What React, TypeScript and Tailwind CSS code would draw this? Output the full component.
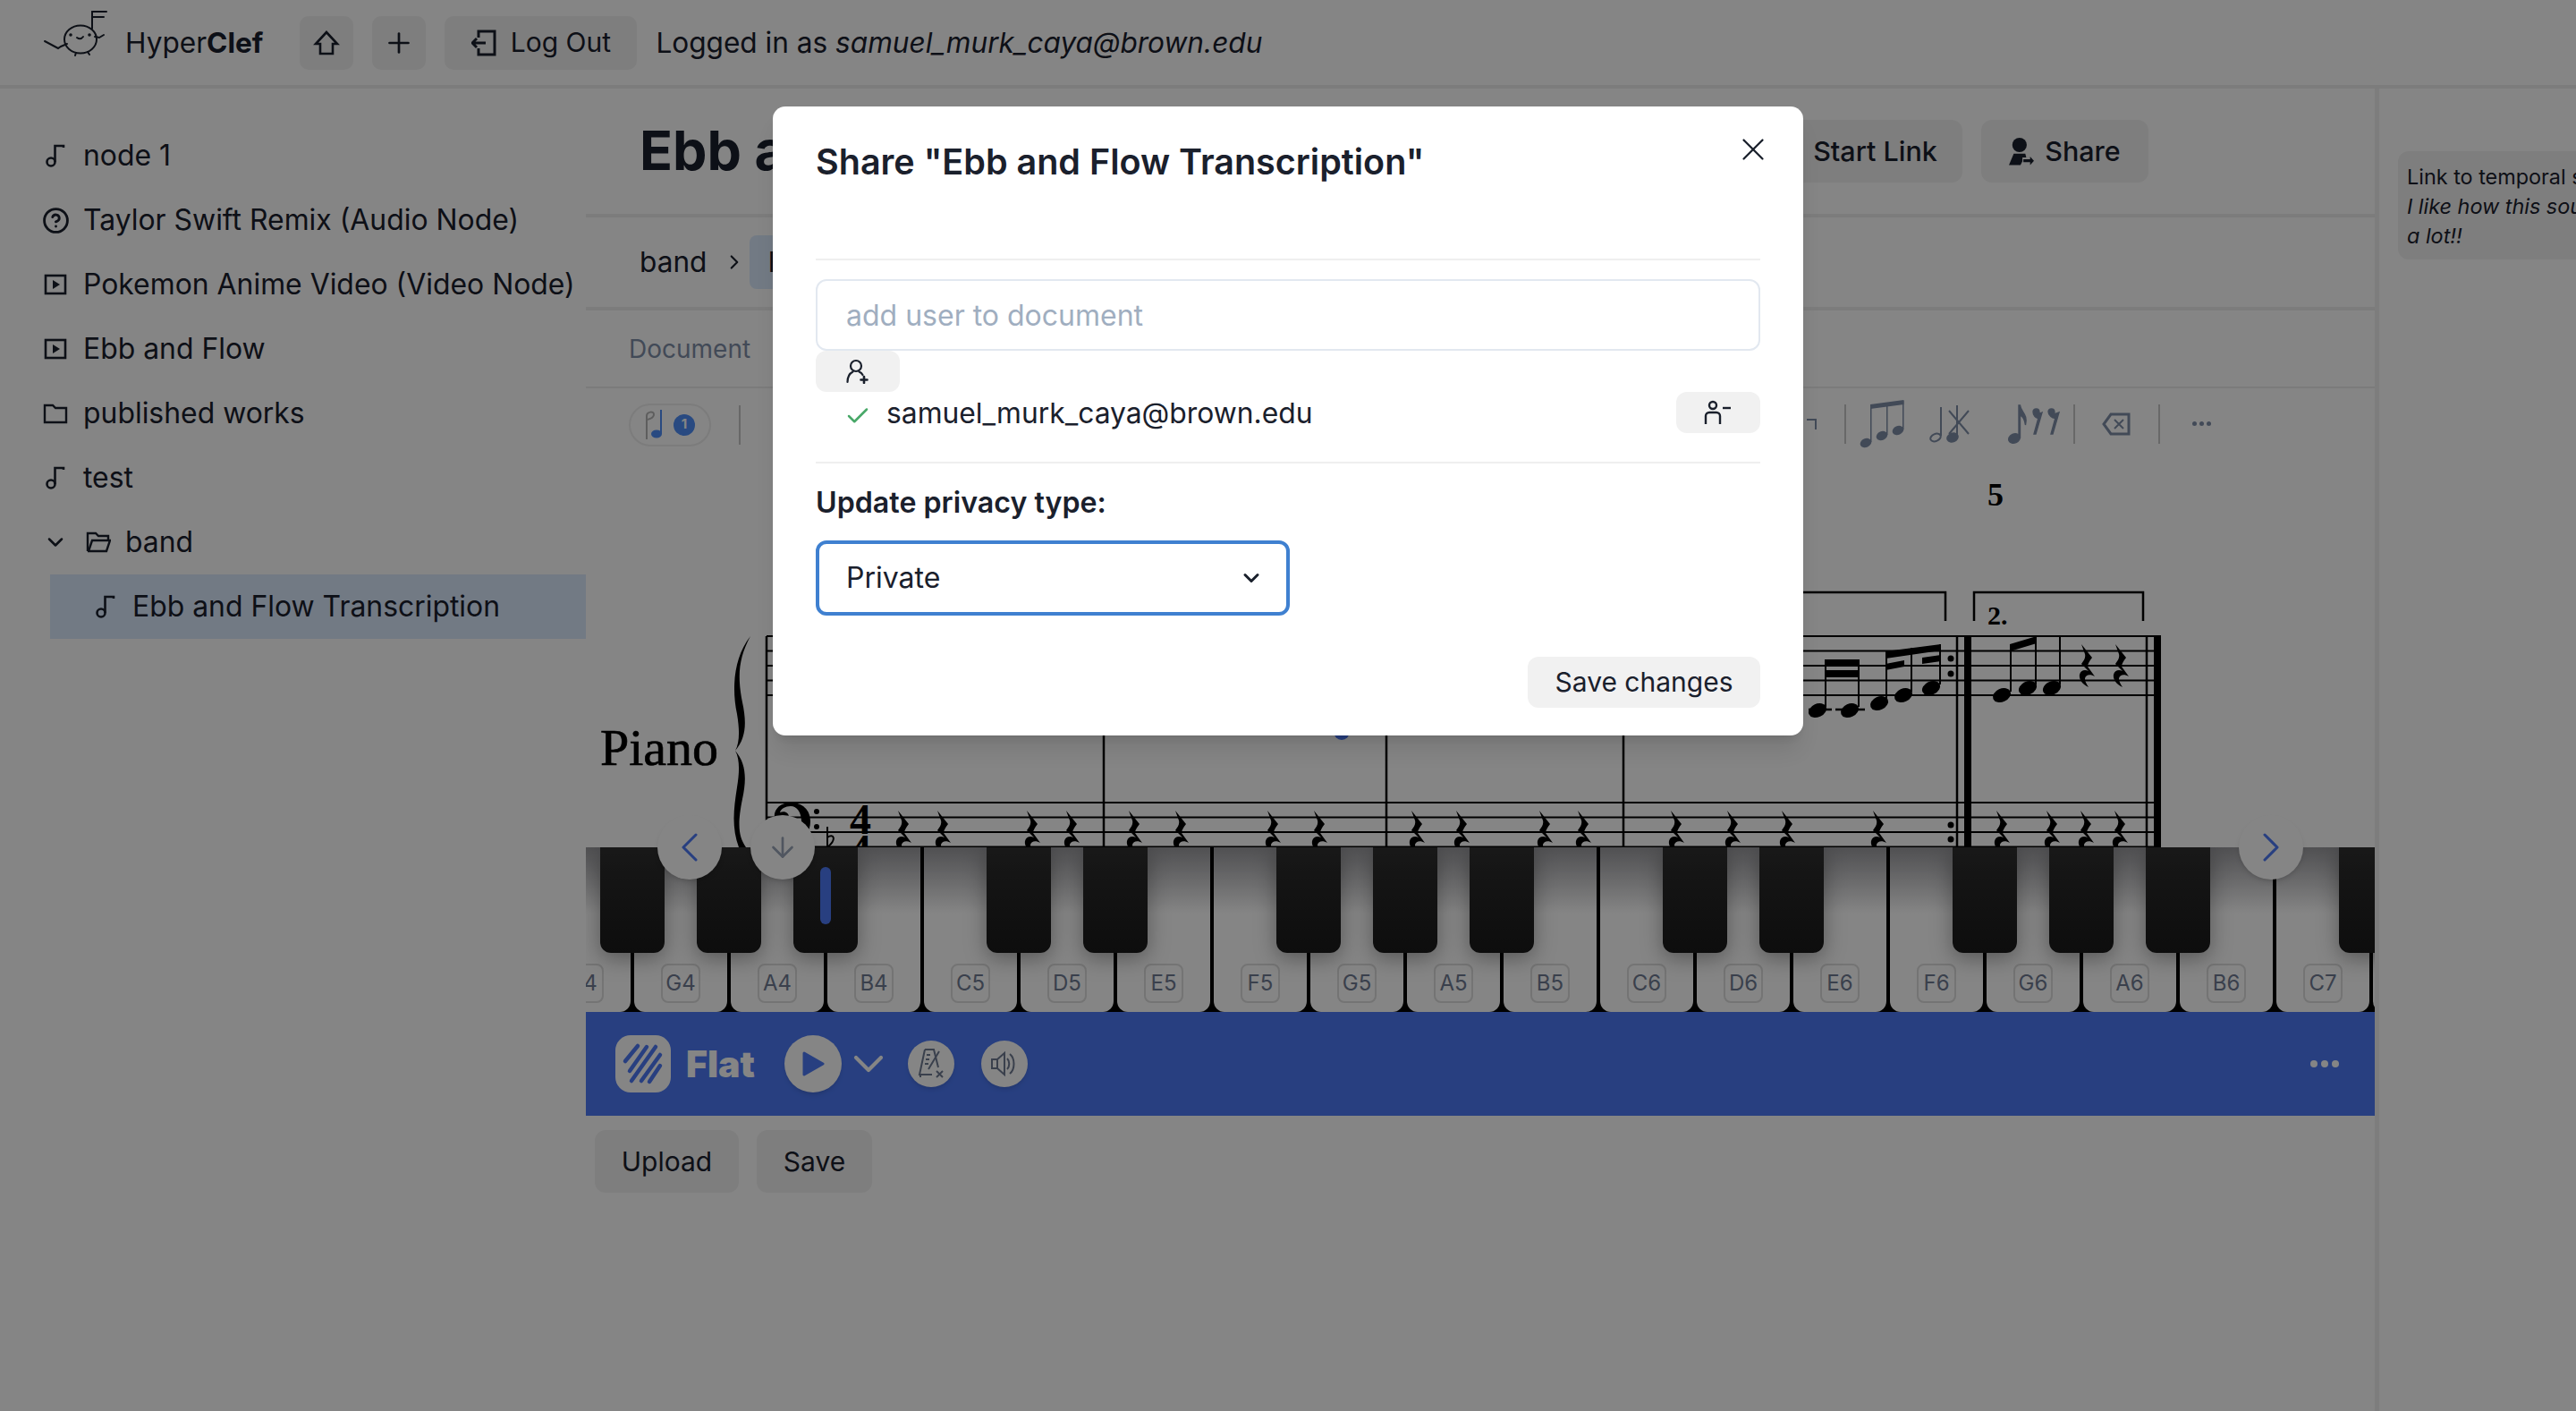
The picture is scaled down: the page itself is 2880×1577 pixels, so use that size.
import { ChevronDown, ChevronLeft, ChevronRight, ArrowDown, CircleHelp, Plus, X, Check } from 'lucide-react'

const WHITE_KEYS = [
  { label: 'F4', black: true }, { label: 'G4', black: true }, { label: 'A4', black: true, active: true }, { label: 'B4' },
  { label: 'C5', black: true }, { label: 'D5', black: true }, { label: 'E5' },
  { label: 'F5', black: true }, { label: 'G5', black: true }, { label: 'A5', black: true }, { label: 'B5' },
  { label: 'C6', black: true }, { label: 'D6', black: true }, { label: 'E6' },
  { label: 'F6', black: true }, { label: 'G6', black: true }, { label: 'A6', black: true }, { label: 'B6' },
  { label: 'C7', black: true }, { label: 'D7' },
]

const BASS_RESTS = [1009, 1053, 1153, 1197, 1267, 1319, 1422, 1474, 1583, 1633, 1726, 1769, 1873, 1936, 1997, 2099, 2237, 2293, 2331, 2369]
const STAFF_TOP = [711, 727.5, 744, 760.5, 777]
const STAFF_BOTTOM = [897, 913.5, 930, 946.5]

function NoteIcon() {
  return (
    <svg width="24" height="26" viewBox="0 0 24 26" fill="none" stroke="currentColor" strokeWidth="2.6" className="shrink-0">
      <circle cx="7" cy="20" r="4.5" />
      <path d="M11.5 20V2H21V4" />
    </svg>
  )
}

function PlaySquareIcon() {
  return (
    <svg width="26" height="24" viewBox="0 0 26 24" className="shrink-0">
      <rect x="2" y="2" width="22" height="20" fill="none" stroke="currentColor" strokeWidth="2.6" />
      <path d="M10 7l8 5-8 5z" fill="currentColor" />
    </svg>
  )
}

function FolderIcon() {
  return (
    <svg width="28" height="24" viewBox="0 0 28 24" fill="none" stroke="currentColor" strokeWidth="2.4" className="shrink-0">
      <path d="M2 22V2h9l3 3h11v4" />
      <path d="M2 22h21l4-12H7L3 22" />
    </svg>
  )
}

function Logo() {
  return (
    <svg width="76" height="52" viewBox="0 0 76 52" fill="none" stroke="#1a202c" strokeWidth="2" strokeLinecap="round" className="shrink-0 -mt-[22px]">
      <ellipse cx="42" cy="33" rx="18" ry="15.5" />
      <path d="M2 35l15 8 3-2 7-3" />
      <path d="M58 30l5 1 5-3" />
      <path d="M55 2v19" />
      <path d="M55 2h16M55 8h13" />
      <path d="M37 48l-1 3M50 47l2 3" />
      <circle cx="31" cy="28" r="0.8" />
      <circle cx="52" cy="28" r="0.8" />
      <path d="M38 31q4 3 7-1" />
    </svg>
  )
}

function PersonPlus() {
  return (
    <svg width="26" height="28" viewBox="0 0 26 28" fill="none" stroke="#1a202c" strokeWidth="2.2" strokeLinecap="round">
      <circle cx="11" cy="8" r="6" />
      <path d="M1.500 26c0-6 3-10 6-11.500M14.500 14.500c2 .8 3.200 2 4 3.500" />
      <path d="M20 20v7M16.500 23.500h7" strokeWidth="2.6" />
    </svg>
  )
}

function PersonMinus() {
  return (
    <svg width="32" height="28" viewBox="0 0 32 28" fill="none" stroke="#1a202c" strokeWidth="2.4">
      <circle cx="10" cy="6" r="4" />
      <path d="M2 27v-9a4 4 0 0 1 4-4h8a4 4 0 0 1 4 4v9" />
      <path d="M21 9h9" />
    </svg>
  )
}

function QuarterRest({ x, y }: { x: number; y: number }) {
  return (
    <path
      transform={`translate(${x - 8} ${y})`}
      fill="#000"
      d="M3 0L15 15C12 19 10 22 10 25L18 36C13 33 8 34 7 38C7 42 9 45 11 48C4 45 0 39 1 34C2 29 7 28 11 30L3 22C6 18 8 15 7 11Z"
    />
  )
}

function Head({ x, y }: { x: number; y: number }) {
  return <ellipse cx={x} cy={y} rx="10.500" ry="7.500" transform={`rotate(-24 ${x} ${y})`} fill="#000" />
}

function Score() {
  return (
    <svg viewBox="655 515 2000 432" className="block w-[2000px] h-[432px]">
      <text x="2222" y="565" fontSize="36" fontWeight="700" className="font-['Liberation_Serif',serif]">5</text>
      <text x="671" y="855" fontSize="58" stroke="#000" strokeWidth="0.7" className="font-['Liberation_Serif',serif]">Piano</text>

      {/* brace */}
      <path d="M839 711C826 735 824 755 830 785C835 808 834 825 822 839C834 853 835 870 830 893C824 923 826 935 834 947L826 947C818 925 820 905 824 880C827 862 827 848 822 839C827 830 827 816 824 798C818 770 820 735 839 711Z" fill="#000" />

      {STAFF_TOP.map(y => <line key={y} x1="857" x2="2416" y1={y} y2={y} stroke="#000" strokeWidth="2" />)}
      {STAFF_BOTTOM.map(y => <line key={y} x1="857" x2="2416" y1={y} y2={y} stroke="#000" strokeWidth="2" />)}

      {[857, 1234, 1550, 1815, 2188, 2400].map(x => <line key={x} x1={x} x2={x} y1="711" y2="947" stroke="#000" strokeWidth="2.500" />)}
      <rect x="2196" y="711" width="8" height="236" fill="#000" />
      <rect x="2408" y="711" width="8" height="236" fill="#000" />

      {/* volta brackets */}
      <path d="M1900 662H2175V694" fill="none" stroke="#000" strokeWidth="2.500" />
      <path d="M2207 694V662H2396V694" fill="none" stroke="#000" strokeWidth="2.500" />
      <text x="2222" y="698" fontSize="30" fontWeight="700" className="font-['Liberation_Serif',serif]">2.</text>

      <circle cx="1500" cy="818" r="9" fill="#4d7af6" />

      {/* last bars of the first ending */}
      <path d="M2022 793H2048M2052 793H2085" stroke="#000" strokeWidth="2.500" />
      <Head x={2032} y={794} />
      <Head x={2068} y={794} />
      <path d="M2041 790V737M2078 790V737M2109 782V728M2137 773V724M2169 765V720" stroke="#000" strokeWidth="2" />
      <rect x="2041" y="737" width="38" height="8" fill="#000" />
      <rect x="2041" y="749" width="38" height="8" fill="#000" />
      <Head x={2101} y={786} />
      <Head x={2128} y={777} />
      <Head x={2159} y={769} />
      <path d="M2108 728L2170 720V727L2108 736Z" fill="#000" />
      <path d="M2108 742L2129 738V745L2108 749Z" fill="#000" />
      <path d="M2149 735L2170 732V739L2149 742Z" fill="#000" />
      {[736, 753, 922, 938].map(y => <circle key={y} cx="2181" cy={y} r="3.500" fill="#000" />)}

      {/* second ending */}
      <Head x={2238} y={777} />
      <Head x={2267} y={769} />
      <Head x={2294} y={769} />
      <path d="M2248 773V720M2276 765V712M2303 765V711" stroke="#000" strokeWidth="2" />
      <path d="M2247 720L2277 711V719L2247 728Z" fill="#000" />
      <QuarterRest x={2332} y={720} />
      <QuarterRest x={2370} y={720} />

      {/* bass staff */}
      <path d="M866 916C864 905 872 897 884 897C897 897 906 905 906 918C906 932 896 943 880 952L879 950C890 942 896 930 896 918C896 908 891 901 884 901C878 901 873 904 872 908C878 906 882 909 882 913C882 917 878 920 874 920C870 920 867 919 866 916Z" fill="#000" />
      <circle cx="913" cy="907" r="3" fill="#000" />
      <circle cx="913" cy="924" r="3" fill="#000" />
      <path d="M925 924V947M925 936C932 931 936 938 925 947" fill="none" stroke="#000" strokeWidth="2" />
      <text x="950" y="932" fontSize="48" fontWeight="700" className="font-['Liberation_Serif',serif]">4</text>
      <text x="950" y="966" fontSize="48" fontWeight="700" className="font-['Liberation_Serif',serif]">4</text>
      {BASS_RESTS.map(x => <QuarterRest key={x} x={x} y={906} />)}
    </svg>
  )
}

function Keyboard() {
  return (
    <div className="relative h-[184px] bg-black overflow-hidden">
      <div className="flex gap-[4px] h-full -ml-[54px]">
        {WHITE_KEYS.map(k => (
          <div key={k.label} className="relative w-[104px] h-full shrink-0 rounded-b-[12px] bg-linear-to-b from-[#9a9a9e] via-white via-[40%] to-white">
            <span className="absolute left-[30px] top-[130px] w-[44px] h-[44px] flex items-center justify-center rounded-[8px] border-2 border-[#dedede] text-[24px] text-[#6f7b93]">{k.label}</span>
            {k.black && (
              <div className="absolute z-10 top-0 -right-[38px] w-[72px] h-[118px] rounded-b-[12px] bg-linear-to-b from-[#2f2f2f] to-[#1a1a1a] shadow-[0_6px_24px_rgba(0,0,0,0.35)]">
                {k.active && <div className="absolute left-[30px] top-[22px] w-[12px] h-[64px] rounded-full bg-[#4d7af6]" />}
              </div>
            )}
          </div>
        ))}
      </div>
    </div>
  )
}

function FlatBar() {
  return (
    <div className="h-[116px] bg-[#4d7af6] flex items-center pl-[33px] pr-[40px]">
      <div className="w-[62px] h-[64px] rounded-[17px] bg-white flex items-center justify-center">
        <svg width="62" height="64" viewBox="0 0 62 64" stroke="#4d7af6" strokeWidth="4.500" strokeLinecap="round">
          <path d="M11 29L25 12M16 40L35 13M18 51L45 13M29 51L50 22M38 52L50 34" />
        </svg>
      </div>
      <span className="ml-[17px] w-[78px] text-[41px] leading-none font-black text-white">Flat</span>
      <div className="ml-[32px] w-[64px] h-[64px] rounded-full bg-white flex items-center justify-center shadow-md">
        <svg width="26" height="30" viewBox="0 0 26 30"><path d="M3 3l21 12L3 27z" fill="#4d7af6" stroke="#4d7af6" strokeWidth="3" strokeLinejoin="round" /></svg>
      </div>
      <ChevronDown size={56} strokeWidth={1.8} className="ml-[2px] text-white" />
      <div className="ml-[16px] w-[52px] h-[52px] rounded-full bg-white flex items-center justify-center shadow-md">
        <svg width="32" height="36" viewBox="0 0 32 36" fill="none" stroke="#6f7b93" strokeWidth="2">
          <path d="M9 2h10l5 20M9 2L3 30h14" />
          <path d="M11 8h4M10 13h4M9 18h4M13 24l12-20" />
          <path d="M22 26l7 7M29 26l-7 7M4 30v3" />
        </svg>
      </div>
      <div className="ml-[30px] w-[52px] h-[52px] rounded-full bg-white flex items-center justify-center shadow-md">
        <svg width="32" height="32" viewBox="0 0 32 32" fill="none" stroke="#6f7b93" strokeWidth="2">
          <path d="M2 11h6l8-7v24l-8-7H2z" />
          <path d="M8 11v10M19 10c3 3 3 9 0 12M22 5c6 5 6 17 0 22" />
        </svg>
      </div>
      <div className="ml-auto flex gap-[4px]">
        <span className="w-[8px] h-[8px] rounded-full bg-white" />
        <span className="w-[8px] h-[8px] rounded-full bg-white" />
        <span className="w-[8px] h-[8px] rounded-full bg-white" />
      </div>
    </div>
  )
}

function Sidebar() {
  const items = [
    { label: 'node 1', icon: <NoteIcon /> },
    { label: 'Taylor Swift Remix (Audio Node)', icon: <CircleHelp size={31} strokeWidth={2.2} className="shrink-0" /> },
    { label: 'Pokemon Anime Video (Video Node)', icon: <PlaySquareIcon /> },
    { label: 'Ebb and Flow', icon: <PlaySquareIcon /> },
    { label: 'published works', icon: <svg width="28" height="24" viewBox="0 0 28 24" fill="none" stroke="currentColor" strokeWidth="2.400" className="shrink-0"><path d="M2 22V3h9l3 3h12v16z" /></svg> },
    { label: 'test', icon: <NoteIcon /> },
  ]
  return (
    <aside className="w-[655px] shrink-0 pt-[39px] text-[#1a202c] text-[31.9px]">
      {items.map(i => (
        <div key={i.label} className="h-[72px] flex items-center gap-[18px] pl-[49px] whitespace-nowrap">
          <span className="w-[26px] flex justify-center">{i.icon}</span>
          <span>{i.label}</span>
        </div>
      ))}
      <div className="h-[72px] flex items-center pl-[50px] whitespace-nowrap">
        <ChevronDown size={28} strokeWidth={2.2} className="-ml-[2px]" />
        <span className="ml-[20px]"><FolderIcon /></span>
        <span className="ml-[16px]">band</span>
      </div>
      <div className="ml-[56px] h-[72px] flex items-center gap-[18px] pl-[50px] bg-[#dbeafe] whitespace-nowrap">
        <NoteIcon />
        <span>Ebb and Flow Transcription</span>
      </div>
    </aside>
  )
}

function Toolbar() {
  return (
    <div className="h-[83px] flex items-center pl-[48px] pr-[183px] text-[#7f8ea8] border-t-2 border-[#ececec]">
      <div className="w-[92px] h-[48px] rounded-full border-2 border-[#ededed] flex items-center justify-center gap-[10px]">
        <svg width="22" height="36" viewBox="0 0 22 36" fill="none">
          <path d="M2 34V8c0-5 8-6 8-2 0 5-8 6-8 6" stroke="#b4b4b4" strokeWidth="2" />
          <path d="M18 1v27" stroke="#4f8ef7" strokeWidth="2" />
          <ellipse cx="13" cy="28" rx="6" ry="4.500" fill="#4f8ef7" />
        </svg>
        <span className="w-[24px] h-[24px] rounded-full bg-[#4f8ef7] text-white text-[15px] font-bold flex items-center justify-center">1</span>
      </div>
      <div className="ml-[31px] w-[2px] h-[44px] bg-[#c8c8c8]" />
      <div className="ml-auto flex items-center -mt-[2px]">
        <svg width="11" height="12" viewBox="0 0 11 12" fill="none" stroke="currentColor" strokeWidth="2"><path d="M0 1h10v11" /></svg>
        <div className="ml-[31px] w-[2px] h-[44px] bg-[#c8c8c8]" />
        <svg width="50" height="54" viewBox="0 0 50 54" fill="currentColor" className="ml-[15px]">
          <ellipse cx="7" cy="48" rx="6.500" ry="5" transform="rotate(-24 7 48)" />
          <ellipse cx="25" cy="40" rx="6.500" ry="5" transform="rotate(-24 25 40)" />
          <ellipse cx="43" cy="34" rx="6.500" ry="5" transform="rotate(-24 43 34)" />
          <path d="M12 47V6h1.500v41zM30 39V4h1.500v35zM48 33V1h1.500v32z" />
          <path d="M12 5L49.500 0v5L12 10z" />
        </svg>
        <svg width="46" height="42" viewBox="0 0 46 42" fill="none" stroke="currentColor" strokeWidth="2" className="ml-[28px]">
          <ellipse cx="7" cy="36" rx="6" ry="4" transform="rotate(-24 7 36)" />
          <ellipse cx="26" cy="36" rx="6" ry="4.500" transform="rotate(-24 26 36)" fill="currentColor" />
          <path d="M13 34V2M31 34V0M22 6l22 26M44 6L22 32" />
        </svg>
        <svg width="62" height="44" viewBox="0 0 62 44" fill="currentColor" stroke="currentColor" strokeWidth="1.4" className="ml-[42px]">
          <ellipse cx="7" cy="38" rx="6.500" ry="5" transform="rotate(-24 7 38)" />
          <path d="M12 37V1h1.500c1 8 9 10 6 22-1-7-3-10-6-11v25z" />
          <path d="M28 8a3.500 3.500 0 1 1 4 4l6-3-7 24h-2l5-18c-3 1-6-3-6-7zM45 8a3.500 3.500 0 1 1 4 4l8-3-7 24h-2l5-18c-3 1-8-3-8-7z" />
        </svg>
        <div className="ml-[11px] w-[2px] h-[44px] bg-[#c8c8c8]" />
        <svg width="32" height="26" viewBox="0 0 32 26" fill="none" stroke="currentColor" strokeWidth="3" className="ml-[30px]">
          <path d="M10 2h20v22H10L2 13z" />
          <path d="M14 8l10 10M24 8L14 18" strokeWidth="2" />
        </svg>
        <div className="ml-[31px] w-[2px] h-[44px] bg-[#c8c8c8]" />
        <div className="ml-[36px] flex gap-[3px]">
          <span className="w-[5px] h-[5px] rounded-full bg-current" />
          <span className="w-[5px] h-[5px] rounded-full bg-current" />
          <span className="w-[5px] h-[5px] rounded-full bg-current" />
        </div>
      </div>
    </div>
  )
}

function ShareModal() {
  return (
    <div className="absolute inset-0 z-40 bg-black/48 flex justify-center items-start pt-[119px]">
      <div className="relative w-[1152px] h-[703px] bg-white rounded-[14px] shadow-xl text-[#1a202c] px-[48px]">
        <h2 className="pt-[42px] h-[172px] text-[39.5px] leading-[40px] font-semibold border-b-2 border-[#efefef]">Share "Ebb and Flow Transcription"</h2>
        <button className="absolute right-[35px] top-[27px]"><X size={42} strokeWidth={1.3} /></button>
        <input
          readOnly
          placeholder="add user to document"
          className="mt-[21px] block w-full h-[80px] px-[32px] rounded-[12px] border-2 border-[#e2e8f0] text-[32px] outline-none placeholder:text-[#a0aec0]"
        />
        <button className="w-[94px] h-[46px] flex items-center justify-center rounded-[12px] bg-[#f1f1f1]"><PersonPlus /></button>
        <div className="flex h-[80px] border-b-2 border-[#efefef] items-start">
          <Check size={30} strokeWidth={2} className="ml-[32px] mt-[12px] text-[#48a868]" />
          <span className="ml-[17px] mt-[4px] text-[31.8px] leading-[40px]">samuel_murk_caya@brown.edu</span>
          <button className="ml-auto w-[94px] h-[46px] flex items-center justify-center rounded-[12px] bg-[#f1f1f1]"><PersonMinus /></button>
        </div>
        <p className="mt-[28px] text-[32.2px] leading-[32px] font-semibold">Update privacy type:</p>
        <div className="mt-[26px] w-[530px] h-[84px] rounded-[12px] border-4 border-[#3f80d0] flex items-center justify-between pl-[30px] pr-[25px] text-[32px]">
          Private
          <ChevronDown size={28} strokeWidth={2.600} />
        </div>
        <div className="flex justify-end mt-[46px]">
          <button className="w-[260px] h-[57px] rounded-[12px] bg-[#f1f1f1] text-[30px]">Save changes</button>
        </div>
      </div>
    </div>
  )
}

export default function App() {
  return (
    <div className="relative w-full h-screen overflow-hidden bg-white text-[#1a202c] font-[Inter,sans-serif] flex flex-col">
      <header className="h-[99px] shrink-0 flex items-center pl-[48px] border-b-4 border-[#ededed] text-[31.6px] whitespace-nowrap">
        <Logo />
        <span className="ml-[16px]">Hyper<b className="font-bold">Clef</b></span>
        <button className="ml-[41px] w-[60px] h-[60px] rounded-[10px] bg-[#f2f2f2] flex items-center justify-center">
          <svg width="30" height="28" viewBox="0 0 30 28" fill="none" stroke="#1a202c" strokeWidth="2.6"><path d="M15 2L3 15h5v11h14V15h5z" /></svg>
        </button>
        <button className="ml-[21px] w-[60px] h-[60px] rounded-[10px] bg-[#f2f2f2] flex items-center justify-center"><Plus size={36} strokeWidth={1.8} /></button>
        <button className="ml-[21px] w-[215px] h-[60px] rounded-[10px] bg-[#f2f2f2] flex items-center justify-center gap-[16px] text-[30px]">
          <svg width="28" height="30" viewBox="0 0 28 30" fill="none" stroke="#1a202c" strokeWidth="3"><path d="M8 9V2h18v26H8v-7M1 15h15M6 10l-5 5 5 5" /></svg>
          Log Out
        </button>
        <span className="ml-[21px]">Logged in as <i>samuel_murk_caya@brown.edu</i></span>
      </header>

      <div className="flex-1 flex min-h-0">
        <Sidebar />

        <main className="w-[2000px] shrink-0 flex flex-col">
          <div className="h-[144px] shrink-0 flex items-center justify-between pl-[60px] pr-[253px] border-b-4 border-[#ededed]">
            <h1 className="text-[61px] font-bold whitespace-nowrap">Ebb and Flow Transcription</h1>
            <div className="flex gap-[21px] text-[30.5px] font-medium">
              <button className="w-[195px] h-[70px] rounded-[12px] bg-[#f2f2f2]">Start Link</button>
              <button className="w-[187px] h-[70px] rounded-[12px] bg-[#f2f2f2] flex items-center justify-center gap-[12px]">
                <svg width="28" height="33" viewBox="0 0 26 30" fill="#1a202c">
                  <circle cx="11" cy="8" r="7.500" />
                  <path d="M5 17h12l1 4h-4v4l-2 4H0zM15 23h7v-3l4 4.500-4 4.500v-3h-7z" />
                </svg>
                Share
              </button>
            </div>
          </div>
          <div className="h-[104px] shrink-0 flex items-center pl-[60px] text-[31.6px] border-b-4 border-[#ededed]">
            band
            <ChevronRight size={26} strokeWidth={2} className="ml-[18px]" />
            <span className="ml-[4px] h-[60px] px-[20px] flex items-center rounded-[8px] bg-[#dbeafe] whitespace-nowrap">Ebb and Flow Transcription</span>
          </div>
          <div className="h-[85px] shrink-0 flex items-center pl-[48px] text-[28px] text-[#7f8ea8]">Document</div>
          <Toolbar />
          <div className="relative">
            <div className="h-[432px] overflow-hidden"><Score /></div>
            <Keyboard />
            <button className="absolute z-20 left-[80px] top-[396px] w-[72px] h-[72px] rounded-full bg-white shadow-md flex items-center justify-center text-[#4d7af6]"><ChevronLeft size={56} strokeWidth={1.3} /></button>
            <button className="absolute z-20 left-[184px] top-[396px] w-[72px] h-[72px] rounded-full bg-white shadow-md flex items-center justify-center text-[#9aa5b8]"><ArrowDown size={36} strokeWidth={1.8} /></button>
            <button className="absolute z-20 left-[1848px] top-[396px] w-[72px] h-[72px] rounded-full bg-white shadow-md flex items-center justify-center text-[#4d7af6]"><ChevronRight size={56} strokeWidth={1.3} /></button>
          </div>
          <FlatBar />
          <div className="flex gap-[20px] pl-[10px] pt-[16px] text-[30px]">
            <button className="w-[161px] h-[70px] rounded-[12px] bg-[#f2f2f2]">Upload</button>
            <button className="w-[129px] h-[70px] rounded-[12px] bg-[#f2f2f2]">Save</button>
          </div>
        </main>

        <div className="flex-1 min-w-0 border-l-[5px] border-[#efefef] pt-[70px] pl-[21px] overflow-hidden">
          <div className="w-[300px] h-[121px] rounded-[12px] bg-[#f2f2f2] px-[10px] py-[12px] text-[23.4px] leading-[33px] whitespace-nowrap">
            <p>Link to temporal section</p>
            <p className="italic">I like how this sounds</p>
            <p className="italic">a lot!!</p>
          </div>
        </div>
      </div>

      <ShareModal />
    </div>
  )
}
